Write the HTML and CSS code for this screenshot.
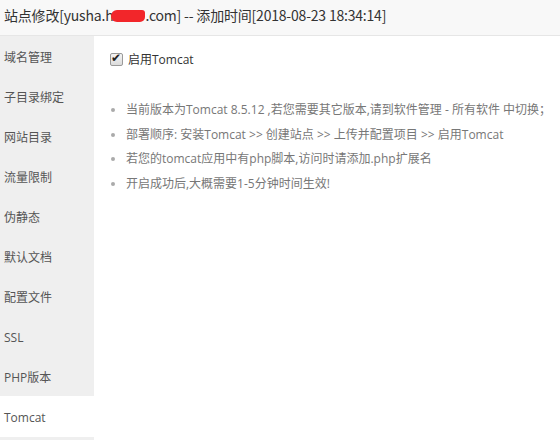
FILE: index.html
```html
<!DOCTYPE html>
<html lang="zh-CN">

<head>
    <meta charset="UTF-8">
    <title>站点修改</title>
    <link rel="stylesheet" href="styles.css">
</head>

<body>
    <div class="layer-title">
        站点修改[yusha.h<span class="mask"></span>.com] -- 添加时间[2018-08-23 18:34:14]
    </div>

    <div class="layer-body">
        <div class="side-menu">
            <p>域名管理</p>
            <p>子目录绑定</p>
            <p>网站目录</p>
            <p>流量限制</p>
            <p>伪静态</p>
            <p>默认文档</p>
            <p>配置文件</p>
            <p>SSL</p>
            <p>PHP版本</p>
            <p class="active">Tomcat</p>
        </div>

        <div class="tab-con">
            <label class="check-line">
                <input type="checkbox" checked>
                <span>启用Tomcat</span>
            </label>

            <ul class="help-info">
                <li>当前版本为Tomcat 8.5.12 ,若您需要其它版本,请到软件管理 - 所有软件 中切换；</li>
                <li>部署顺序: 安装Tomcat &gt;&gt; 创建站点 &gt;&gt; 上传并配置项目 &gt;&gt; 启用Tomcat</li>
                <li>若您的tomcat应用中有php脚本,访问时请添加.php扩展名</li>
                <li>开启成功后,大概需要1-5分钟时间生效!</li>
            </ul>
        </div>
    </div>
</body>

</html>
```

FILE: styles.css
```css
body {
    margin: 0;
    padding: 0;
    font-family: "Open Sans", "Noto Sans CJK SC", sans-serif;
    color: #333;
    background-color: #fff;
    overflow: hidden;
}

.layer-title {
    height: 35px;
    line-height: 30px;
    padding-left: 4px;
    font-family: "Noto Sans CJK SC", sans-serif;
    font-size: 14px;
    letter-spacing: -0.2px;
    color: #333;
    background-color: #f8f8f8;
    border-bottom: 1px solid #e6e6e6;
    white-space: nowrap;
}

.mask {
    display: inline-block;
    width: 34px;
    height: 12px;
    margin-left: -2px;
    vertical-align: -1px;
    background-color: #f2262a;
    border-radius: 6px 3px 5px 6px;
}

.layer-body {
    display: flex;
    height: 404px;
}

.side-menu {
    width: 94px;
    flex-shrink: 0;
    background-color: #efefef;
}

.side-menu p {
    margin: 0;
    height: 38px;
    padding-top: 2px;
    line-height: 40px;
    padding-left: 4px;
    font-size: 12px;
    color: #555;
}

.side-menu p.active {
    background-color: #fff;
    height: 39px;
}

.tab-con {
    flex: 1;
    padding: 14px 15px 0 16px;
}

.check-line {
    display: flex;
    align-items: center;
    height: 18px;
    font-size: 12px;
    color: #333;
}

.check-line input {
    appearance: none;
    position: relative;
    width: 13px;
    height: 13px;
    margin: 0 5px 0 0;
    border: 1px solid #9a9a9a;
    border-radius: 2px;
    background: linear-gradient(#f4f4f4, #dcdcdc);
}

.check-line input:checked::after {
    content: "\2714";
    position: absolute;
    left: 0;
    top: -3px;
    font-size: 12px;
    color: #222;
}

.help-info {
    list-style: none;
    margin: 30px 0 0 0;
    padding: 0;
}

.help-info li {
    position: relative;
    padding-left: 16px;
    height: 24.5px;
    line-height: 24px;
    font-size: 12px;
    color: #777;
    white-space: nowrap;
}

.help-info li::before {
    content: "";
    position: absolute;
    left: 1px;
    top: 10px;
    width: 4px;
    height: 4px;
    border-radius: 50%;
    background-color: #aaa;
}
```
